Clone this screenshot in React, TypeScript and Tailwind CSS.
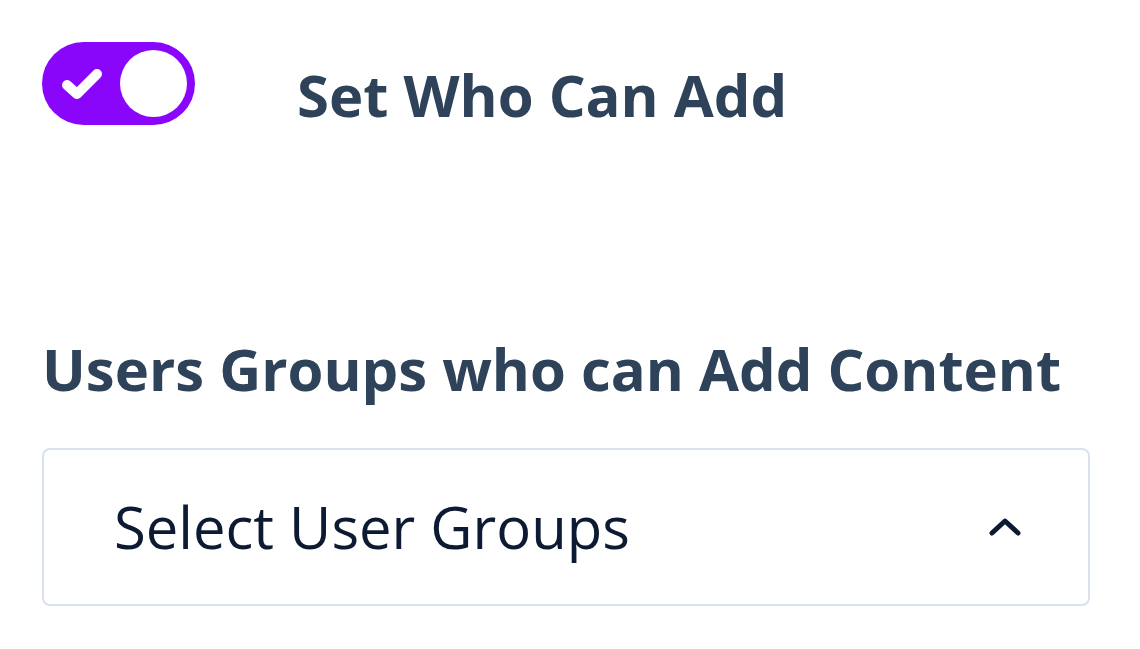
import { useState } from 'react';

function Toggle({ on, onChange }: { on: boolean; onChange: (v: boolean) => void }) {
  return (
    <button
      type="button"
      onClick={() => onChange(!on)}
      className={`flex h-[83px] w-[153px] shrink-0 items-center rounded-full p-[8px] ${on ? 'bg-[#8a06fb]' : 'bg-gray-300'}`}
    >
      <span className="flex flex-1 items-center justify-center pr-[6px]">
        {on && (
          <svg width="46" height="36" viewBox="0 0 46 36" fill="none">
            <path d="M8 19 L18 28 L38 8" stroke="white" strokeWidth="10" strokeLinecap="round" strokeLinejoin="round" />
          </svg>
        )}
      </span>
      <span className="h-[67px] w-[67px] rounded-full bg-white" />
    </button>
  );
}

export default function App() {
  const [canAdd, setCanAdd] = useState(true);

  return (
    <div className="min-h-[649px] w-[1140px] bg-white pl-[42px] pt-[42px] font-['Open_Sans',sans-serif]">
      <div className="flex items-start gap-[102px]">
        <Toggle on={canAdd} onChange={setCanAdd} />
        <h2 className="mt-[24px] text-[58px] font-bold leading-none text-[#2e4259]">Set Who Can Add</h2>
      </div>

      <label className="mt-[215px] block text-[58px] font-bold leading-none text-[#2e4259]">
        Users Groups who can Add Content
      </label>

      <div className="mt-[50px] flex h-[158px] w-[1048px] items-center justify-between rounded-[8px] border-2 border-[#d9e1ed] pl-[70px] pr-[66px]">
        <span className="text-[58px] leading-none text-[#0c1a33]">Select User Groups</span>
        <svg width="34" height="20" viewBox="0 0 34 20" fill="none">
          <path d="M4 16 L17 4 L30 16" stroke="#0c1a33" strokeWidth="5" strokeLinecap="round" strokeLinejoin="round" />
        </svg>
      </div>
    </div>
  );
}
